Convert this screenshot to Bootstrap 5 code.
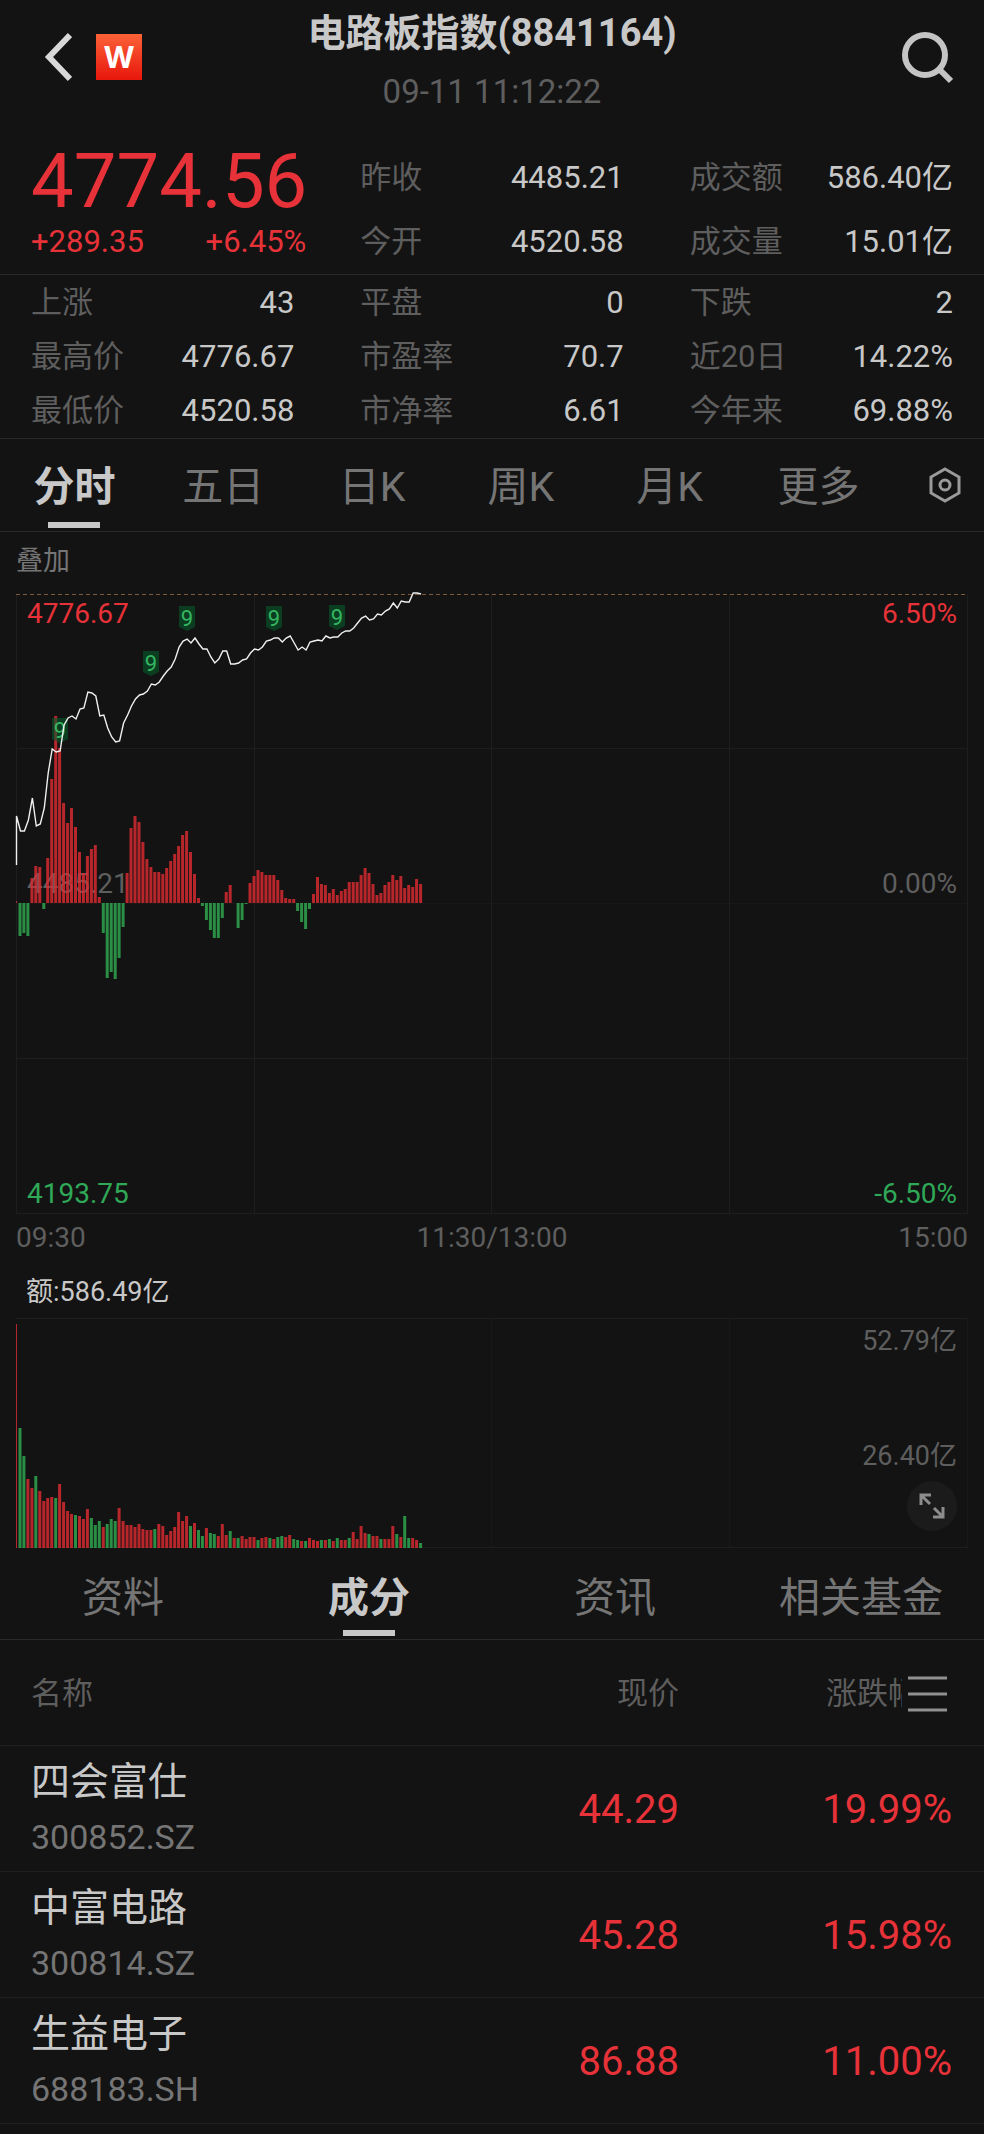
<!DOCTYPE html>
<html lang="zh-CN" data-bs-theme="dark">
<head>
<meta charset="utf-8">
<meta name="viewport" content="width=device-width, initial-scale=1">
<title>电路板指数(8841164)</title>
<link href="https://cdn.jsdelivr.net/npm/bootstrap@5.3.0/dist/css/bootstrap.min.css" rel="stylesheet">
<style>
  :root { --page: #131313; --light: #c8c8c8; --dim: #5e5e5e; --mid: #757575; --rule: #2a2a2a; --faint: #1f1f1f; --up: #e63238; --down: #2fa858; }
  body { background: var(--page); color: var(--light); font-family: Roboto, "Noto Sans CJK SC", sans-serif; font-size: 31px; line-height: 54px; }
  button { background: none; border: 0; padding: 0; color: inherit; line-height: inherit; }
  svg { display: block; }
  .up { color: var(--up); }
  .down { color: var(--down); }
  .dim { color: var(--dim); }
  .rule { border-bottom: 1px solid var(--rule); }

  .topbar { display: grid; grid-template-columns: 1fr auto 1fr; padding: 4px 31px 25px; align-items: start; }
  .topbar-side { margin-top: 28px; }
  .back { margin-left: 13px; margin-right: 24px; }
  .brand-tile { width: 46px; height: 46px; background: linear-gradient(#fb6238, #e8160c); color: #fff; font: 700 30px/46px Inter, sans-serif; text-align: center; }
  .index-name { font-size: 38px; font-weight: 700; line-height: 58px; margin: 0; color: var(--light); }
  .stamp { font-size: 33px; line-height: 59px; }

  .facts { display: grid; grid-template-columns: repeat(3, minmax(0, 1fr)); column-gap: 66px; padding: 0 31px; margin: 0; }
  .facts dt { font-weight: 400; color: var(--dim); }
  .facts dd { margin: 0; }
  .quote { line-height: 64px; }
  .breadth { padding-top: 1px; }
  .headline { margin-right: -12px; }
  .last-price { font-size: 76px; line-height: 58px; padding-top: 6px; }

  .tab { font-size: 41px; line-height: 88px; padding-top: 4px; color: var(--mid); position: relative; }
  .tab.active { color: var(--light); font-weight: 700; }
  .tab.active::after { content: ""; position: absolute; left: 50%; bottom: 3px; width: 52px; height: 6px; margin-left: -26px; background: var(--light); }
  .gear { width: 91px; padding-right: 22px; }

  .panel { padding: 0 16px; }
  .note { font-size: 27px; line-height: 56px; }
  .overlay-row { padding: 1px 0 5px; color: var(--mid); }
  .turnover-note { padding: 5px 0 0 10px; line-height: 52px; }
  .plot { position: relative; }
  .plot svg.canvas { width: 100%; height: auto; position: relative; }
  .scale { position: absolute; inset: 0; padding: 0 11px; font-size: 28px; line-height: 40px; }
  .scale .mid-row { position: absolute; left: 11px; right: 11px; bottom: 50%; }
  .hours { display: grid; grid-template-columns: 1fr auto 1fr; font-size: 28px; line-height: 46px; padding-top: 1px; color: var(--dim); }
  .vol-scale { font-size: 27px; line-height: 46px; }
  .vol-scale .mid-row { bottom: auto; top: 50%; }
  .expand { position: absolute; right: 11px; bottom: 17px; width: 50px; height: 50px; border-radius: 50%; background: #1b1b1b; }
  .lower-tabs .tab { padding-top: 10px; line-height: 81px; }

  .stocks { --bs-table-bg: transparent; --bs-table-color: var(--light); table-layout: fixed; margin: 0; }
  .stocks th, .stocks td { padding: 3px 0 0; border-color: var(--faint); vertical-align: middle; text-align: right; }
  .stocks th { height: 105px; font-weight: 400; color: var(--dim); }
  .stocks td { height: 126px; font-size: 40px; color: var(--up); }
  .stocks tr > :first-child { text-align: left; padding-left: 31px; }
  .stocks tr > :last-child { padding-right: 32px; }
  .stocks td a { color: var(--light); text-decoration: none; display: block; font-size: 39px; line-height: 55px; }
  .stocks td small { display: block; font-size: 34px; color: var(--mid); }
  .col-now { width: 30%; }
  .col-chg { width: 31%; }
  .clip-head { width: 76px; overflow: hidden; white-space: nowrap; text-align: left; }
  .stocks .menu-btn { margin: 0 5px 0 6px; }
</style>
</head>
<body>

<header class="topbar">
  <div class="topbar-side d-flex align-items-center">
    <button class="back" type="button" aria-label="返回">
      <svg width="28" height="50" viewBox="0 0 28 50" fill="none" stroke="#d8d8d8" stroke-width="6"><path d="M26 3 5 25 26 47"/></svg>
    </button>
    <div class="brand-tile">W</div>
  </div>
  <div class="text-center">
    <h1 class="index-name">电路板指数(8841164)</h1>
    <div class="stamp dim">09-11 11:12:22</div>
  </div>
  <div class="topbar-side d-flex justify-content-end">
    <button type="button" aria-label="搜索">
      <svg width="52" height="52" viewBox="0 0 52 52" fill="none" stroke="#c4c4c4" stroke-width="6"><circle cx="24" cy="23" r="20"/><path d="M38 37 50 49"/></svg>
    </button>
  </div>
</header>

<section class="facts quote rule">
  <div class="headline up">
    <div class="last-price">4774.56</div>
    <div class="d-flex justify-content-between"><span>+289.35</span><span>+6.45%</span></div>
  </div>
  <dl class="m-0">
    <div class="d-flex justify-content-between"><dt>昨收</dt><dd>4485.21</dd></div>
    <div class="d-flex justify-content-between"><dt>今开</dt><dd>4520.58</dd></div>
  </dl>
  <dl class="m-0">
    <div class="d-flex justify-content-between"><dt>成交额</dt><dd>586.40亿</dd></div>
    <div class="d-flex justify-content-between"><dt>成交量</dt><dd>15.01亿</dd></div>
  </dl>
</section>

<dl class="facts breadth rule">
  <div class="d-flex justify-content-between"><dt>上涨</dt><dd>43</dd></div>
  <div class="d-flex justify-content-between"><dt>平盘</dt><dd>0</dd></div>
  <div class="d-flex justify-content-between"><dt>下跌</dt><dd>2</dd></div>
  <div class="d-flex justify-content-between"><dt>最高价</dt><dd>4776.67</dd></div>
  <div class="d-flex justify-content-between"><dt>市盈率</dt><dd>70.7</dd></div>
  <div class="d-flex justify-content-between"><dt>近20日</dt><dd>14.22%</dd></div>
  <div class="d-flex justify-content-between"><dt>最低价</dt><dd>4520.58</dd></div>
  <div class="d-flex justify-content-between"><dt>市净率</dt><dd>6.61</dd></div>
  <div class="d-flex justify-content-between"><dt>今年来</dt><dd>69.88%</dd></div>
</dl>

<nav class="d-flex rule" aria-label="周期">
  <div class="d-flex flex-grow-1">
    <button type="button" class="tab active col">分时</button>
    <button type="button" class="tab col">五日</button>
    <button type="button" class="tab col">日K</button>
    <button type="button" class="tab col">周K</button>
    <button type="button" class="tab col">月K</button>
    <button type="button" class="tab col">更多</button>
  </div>
  <button type="button" class="gear d-flex align-items-center justify-content-end" aria-label="设置">
    <svg width="34" height="36" viewBox="0 0 34 36" fill="none" stroke="#9a9a9a" stroke-width="3"><path d="M17 2 31 10V26L17 34 3 26V10Z"/><circle cx="17" cy="18" r="5"/></svg>
  </button>
</nav>

<main>
  <section class="panel">
    <div class="note overlay-row"><button type="button">叠加</button></div>
    <div class="plot">
      <div class="scale d-flex flex-column justify-content-between">
        <div class="d-flex justify-content-between up"><span>4776.67</span><span>6.50%</span></div>
        <div class="mid-row d-flex justify-content-between dim"><span>4485.21</span><span>0.00%</span></div>
        <div class="d-flex justify-content-between down"><span>4193.75</span><span>-6.50%</span></div>
      </div>
      <svg class="canvas" id="price" viewBox="0 0 952 620" role="img" aria-label="分时走势"></svg>
    </div>
    <div class="hours"><span>09:30</span><span>11:30/13:00</span><span class="text-end">15:00</span></div>
    <div class="note turnover-note">额:586.49亿</div>
    <div class="plot">
      <div class="scale vol-scale dim text-end">
        <div>52.79亿</div>
        <div class="mid-row">26.40亿</div>
      </div>
      <svg class="canvas" id="volume" viewBox="0 0 952 230" role="img" aria-label="成交额"></svg>
      <button type="button" class="expand d-flex align-items-center justify-content-center" aria-label="全屏">
        <svg width="26" height="26" viewBox="0 0 26 26" fill="none" stroke="#8c8c8c" stroke-width="3"><path d="M2 12V2H12M2 2 11 11M24 14V24H14M24 24 15 15"/></svg>
      </button>
    </div>
  </section>

  <nav class="lower-tabs d-flex rule" aria-label="详情">
    <button type="button" class="tab col">资料</button>
    <button type="button" class="tab active col">成分</button>
    <button type="button" class="tab col">资讯</button>
    <button type="button" class="tab col">相关基金</button>
  </nav>

  <table class="table stocks">
    <colgroup><col><col class="col-now"><col class="col-chg"></colgroup>
    <thead>
      <tr>
        <th scope="col">名称</th>
        <th scope="col">现价</th>
        <th scope="col">
          <div class="d-flex align-items-center justify-content-end">
            <div class="clip-head">涨跌幅</div>
            <button type="button" class="menu-btn" aria-label="更多指标">
              <svg width="39" height="36" viewBox="0 0 39 36" stroke="#909090" stroke-width="3"><path d="M0 2H39M0 18H39M0 34H39"/></svg>
            </button>
          </div>
        </th>
      </tr>
    </thead>
    <tbody>
      <tr><td><a href="#">四会富仕<small>300852.SZ</small></a></td><td>44.29</td><td>19.99%</td></tr>
      <tr><td><a href="#">中富电路<small>300814.SZ</small></a></td><td>45.28</td><td>15.98%</td></tr>
      <tr><td><a href="#">生益电子<small>688183.SH</small></a></td><td>86.88</td><td>11.00%</td></tr>
    </tbody>
  </table>
</main>

<script src="https://cdn.jsdelivr.net/npm/bootstrap@5.3.0/dist/js/bootstrap.bundle.min.js"></script>
<script>
  // 240 trading minutes share the plot width.
  const STEP = 952 / 240;
  const RED = '#dc2b31', GREEN = '#2fab50';

  // Height of each momentum bar above (+) or below (-) the zero line.
  const momentum = [2,-33,-30,-33,25,37,36,-6,45,124,187,155,100,80,95,76,51,30,47,54,58,6,-30,-75,-69,-76,-55,-24,30,75,87,81,61,44,36,31,31,29,35,42,49,57,68,72,51,29,5,-3,-17,-27,-35,-35,-15,11,18,0,-25,-17,-1,20,27,33,31,28,28,28,23,13,5,4,4,-8,-19,-26,-6,9,26,19,18,10,14,8,12,14,21,21,21,28,35,30,19,8,10,18,21,28,23,27,15,18,16,24,19];

  // Price line, measured down from the top of the plot.
  const price = [222,237,237,226,204,232,230,214,179,155,158,157,131,124,122,125,115,114,98,99,102,122,121,134,143,148,147,129,121,112,105,101,100,97,90,91,88,82,77,73,65,53,47,45,49,44,50,55,55,63,69,65,57,57,70,70,69,66,65,59,55,56,53,47,46,44,44,48,44,42,49,56,53,56,48,47,46,47,42,44,43,43,39,37,37,34,29,24,22,26,25,20,21,17,15,9,14,7,8,8,-1,-1,0];

  // Turnover bars: positive for a rising minute, negative for a falling one.
  const turnover = [224,-120,-92,69,60,-72,57,47,50,51,-50,64,46,37,34,-33,32,29,39,-30,-23,-27,21,-24,-29,-27,40,27,23,23,21,24,19,18,18,-19,24,22,13,17,21,36,27,32,-22,25,-18,-12,20,-15,-14,12,24,13,-17,10,-10,12,9,11,11,-8,10,11,-10,9,-11,-12,11,13,-9,-8,7,-7,10,8,7,-8,8,-9,7,-10,8,8,-10,16,9,22,15,-14,12,12,-9,9,9,22,-14,11,-32,-10,10,8,-5];

  const line = (x1, y1, x2, y2, extra = '') => `<line x1="${x1}" y1="${y1}" x2="${x2}" y2="${y2}" stroke="#1e1e1e" ${extra}/>`;
  const bar = (i, y, h, colour) => `<rect x="${Math.max(0, i * STEP - 1.5).toFixed(1)}" y="${y}" width="${i ? 3 : 1}" height="${h}" fill="${colour}" fill-opacity=".82"/>`;

  let out = '';
  [0.5, 238.5, 475.5, 713.5, 951.5].forEach(x => out += line(x, 0, x, 620));
  [154.5, 464.5, 619.5].forEach(y => out += line(0, y, 952, y));
  out += line(0, 309.5, 952, 309.5, 'stroke-opacity=".5"');
  out += '<line x1="0" y1=".5" x2="952" y2=".5" stroke="#7b5a3c" stroke-dasharray="4 3"/>';
  momentum.forEach((v, i) => out += v >= 0 ? bar(i, 309 - v, v, RED) : bar(i, 309, -v, GREEN));
  [[44, 136], [135, 69], [171, 24], [258, 24], [321, 23]].forEach(([x, y]) => {
    out += `<path d="M${x - 8} ${y - 12}h16v21l-8 4l-8-4z" fill="#075a2b" fill-opacity=".6"/>` +
           `<text x="${x}" y="${y + 8}" text-anchor="middle" font-size="22" fill="#35b562">9</text>`;
  });
  out += '<polyline fill="none" stroke="#f0f0f0" stroke-width="1.4" points="0.5,271 ' +
         price.map((y, i) => `${(i * STEP + 0.5).toFixed(1)},${y}`).join(' ') + '"/>';
  const priceSvg = document.getElementById('price');
  priceSvg.style.overflow = 'visible';
  priceSvg.innerHTML = out;

  out = '';
  [475.5, 713.5, 951.5].forEach(x => out += line(x, 0, x, 230, 'stroke-opacity=".5"'));
  [0.5, 229.5].forEach(y => out += line(0, y, 952, y));
  turnover.forEach((v, i) => out += bar(i, 230 - Math.abs(v), Math.abs(v), v > 0 ? RED : GREEN));
  document.getElementById('volume').innerHTML = out;
</script>
</body>
</html>
